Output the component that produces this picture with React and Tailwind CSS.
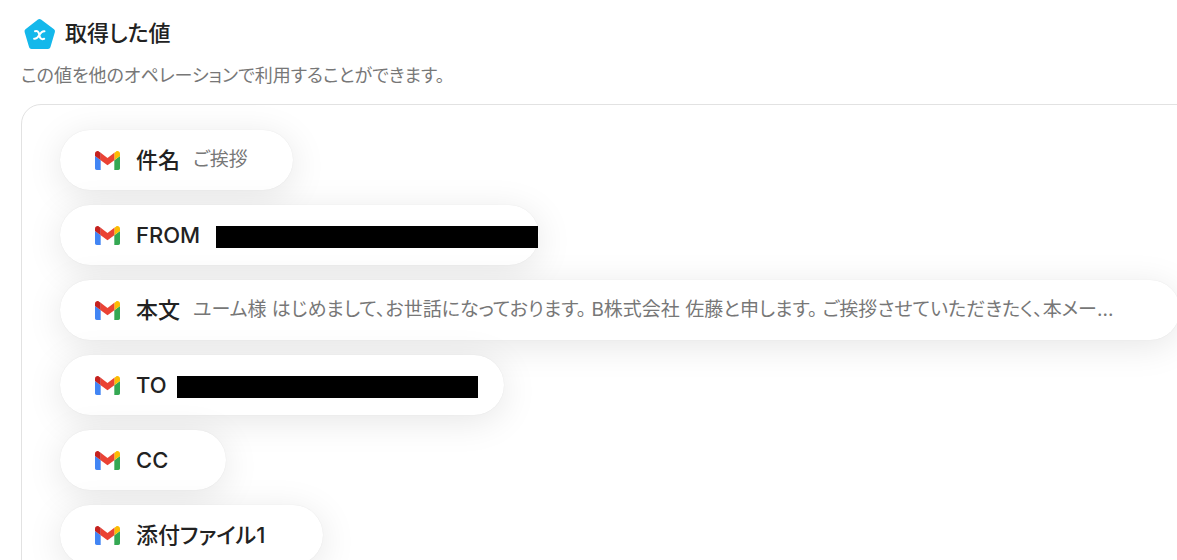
const fields = [
    { label: '件名', value: 'ご挨拶' },
    { label: 'FROM', redacted: 'w-[322px] ml-4 -mr-11' },
    { label: '本文', value: 'ユーム様 はじめまして、お世話になっております。 B株式会社 佐藤と申します。 ご挨拶させていただきたく、本メー...', wide: true },
    { label: 'TO', redacted: 'w-[301px] ml-[10px] -mr-[19px]' },
    { label: 'CC', value: '' },
    { label: '添付ファイル1', value: '' },
];

export default function App() {
    return (
        <main className="h-screen overflow-hidden bg-white pl-[21px] pt-4 text-[#222] font-[Inter,'Noto_Sans_CJK_JP',sans-serif] [font-feature-settings:'palt']">
            <header>
                <div className="flex items-center gap-2 pl-[2px] h-9">
                    <ValueIcon />
                    <h1 className="pb-[2px] text-[22px] leading-8 font-medium">取得した値</h1>
                </div>
                <p className="mt-3 text-[18px] leading-6 text-[#777] whitespace-nowrap">この値を他のオペレーションで利用することができます。</p>
            </header>

            <section className="mt-4 -mr-10 rounded-[20px] border border-[#e2e2e2] pl-[38px] pt-[25px] pb-10">
                <ul className="flex flex-col items-start gap-[15px]">
                    {fields.map((field) => (
                        <FieldPill key={field.label} {...field} />
                    ))}
                </ul>
            </section>
        </main>
    );
}

function FieldPill({ label, value, redacted, wide }) {
    return (
        <li className="flex items-center h-[60px] shrink-0 rounded-full bg-white pl-[35px] pr-[45px] whitespace-nowrap shadow-[0_6px_36px_rgba(0,0,0,0.10),0_0_1px_rgba(0,0,0,0.10)]">
            <GmailIcon />
            <span className="ml-4 text-[22px] leading-8 font-medium">{label}</span>
            {redacted
                ? <span className={`mt-1 h-[22px] bg-black ${redacted}`} />
                : <span className={`ml-[13px] text-[19px] leading-7 text-[#777] ${wide ? 'min-w-[942px]' : ''}`}>{value}</span>}
        </li>
    );
}

function ValueIcon() {
    return (
        <svg viewBox="0 0 34 34" className="w-[34px] h-[34px]" aria-hidden="true">
            <path d="M16.500 4.500 29.500 14.300 25 29.500H8.500L4 14.300Z" fill="#14b8eb" stroke="#14b8eb" strokeWidth="5" strokeLinejoin="round" />
            <path d="M12 14.200c2.400-.8 3.600.4 4.300 3.800s1.700 4.900 4.900 3.800M21.500 14.200c-2.200-.5-3.400.9-5.200 3.800s-2.800 4.300-5.200 3.800" fill="none" stroke="#fff" strokeWidth="2" strokeLinecap="round" />
        </svg>
    );
}

function GmailIcon() {
    return (
        <svg viewBox="52 42 88 66" className="w-[25px] h-[19px] mt-[1px]" aria-hidden="true">
            <path fill="#4285f4" d="M58 108h14V74L52 59v43c0 3.320 2.690 6 6 6" />
            <path fill="#34a853" d="M120 108h14c3.320 0 6-2.690 6-6V59l-20 15" />
            <path fill="#fbbc04" d="M120 48v26l20-15v-8c0-7.420-8.470-11.650-14.400-7.200" />
            <path fill="#ea4335" d="M72 74V48l24 18 24-18v26L96 92" />
            <path fill="#c5221f" d="M52 51v8l20 15V48l-5.600-4.200c-5.940-4.450-14.400-.220-14.400 7.200" />
        </svg>
    );
}
